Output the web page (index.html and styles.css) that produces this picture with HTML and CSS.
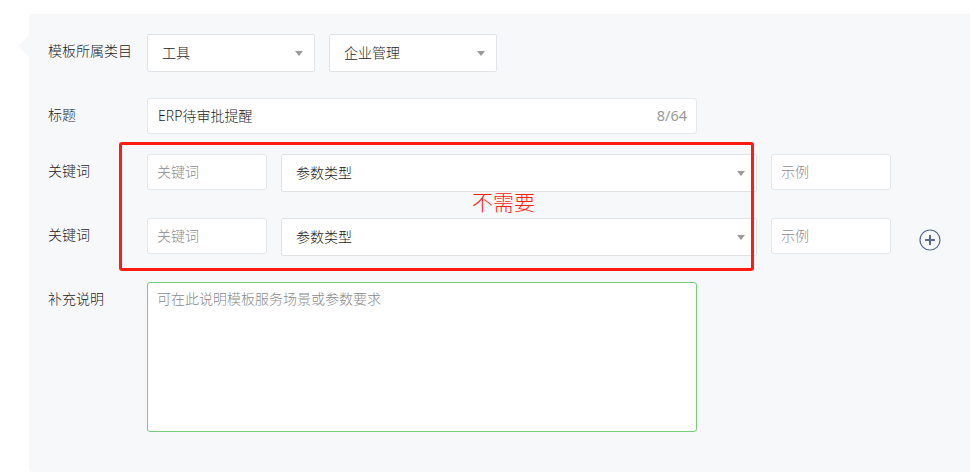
FILE: index.html
```html
<!DOCTYPE html>
<html lang="zh-CN">
<head>
    <meta charset="UTF-8">
    <meta name="viewport" content="width=device-width, initial-scale=1.0">
    <title>模板申请</title>
    <link rel="stylesheet" href="styles.css">
</head>
<body>
    <form class="panel">
        <div class="form-row">
            <label class="form-label">模板所属类目</label>
            <div class="dropdown dropdown-small">工具</div>
            <div class="dropdown dropdown-small">企业管理</div>
        </div>

        <div class="form-row form-row-title">
            <label class="form-label" for="title">标题</label>
            <div class="input-box">
                <input type="text" id="title" value="ERP待审批提醒">
                <span class="counter">8/64</span>
            </div>
        </div>

        <!-- Keywords -->
        <div class="form-row">
            <label class="form-label">关键词</label>
            <div class="input-box input-small"><input type="text" placeholder="关键词"></div>
            <div class="dropdown dropdown-wide">参数类型</div>
            <div class="input-box input-small"><input type="text" placeholder="示例"></div>
        </div>
        <div class="form-row">
            <label class="form-label">关键词</label>
            <div class="input-box input-small"><input type="text" placeholder="关键词"></div>
            <div class="dropdown dropdown-wide">参数类型</div>
            <div class="input-box input-small"><input type="text" placeholder="示例"></div>
            <svg class="add-icon" width="22" height="22" viewBox="0 0 22 22">
                <circle cx="11" cy="11" r="10" fill="none" stroke="#576b95" stroke-width="1.2"/>
                <path d="M11 6v10M6 11h10" stroke="#576b95" stroke-width="2"/>
            </svg>
        </div>

        <div class="form-row">
            <label class="form-label" for="remark">补充说明</label>
            <textarea class="remark" id="remark" placeholder="可在此说明模板服务场景或参数要求"></textarea>
        </div>

        <!-- Marked area -->
        <div class="mark">
            <span class="mark-text">不需要</span>
        </div>
    </form>
</body>
</html>
```
FILE: styles.css
```css
* {
    margin: 0;
    padding: 0;
    box-sizing: border-box;
}
body {
    background-color: #fff;
    color: #1c1c1c;
    font-family: "Noto Sans", "Noto Sans CJK SC", sans-serif;
    font-size: 14px;
    font-weight: 300;
    overflow: hidden;
}
.panel {
    position: relative;
    margin: 14px 0 0 29px;
    padding: 20px 0 40px 19px;
    background-color: #f7f8fa;
    border-radius: 4px 0 0 4px;
}
.panel::before {
    content: "";
    position: absolute;
    left: -11px;
    top: 21px;
    border: 11px solid transparent;
    border-left: 0;
    border-right-color: #f7f8fa;
}
.form-row {
    display: flex;
    align-items: flex-start;
    gap: 14px;
    margin-bottom: 26px;
}
.form-row-title {
    margin-bottom: 20px;
}
.form-row:nth-of-type(5) {
    margin-bottom: 0;
}
.form-label {
    width: 85px;
    line-height: 34px;
    white-space: nowrap;
}
.dropdown {
    display: flex;
    justify-content: space-between;
    height: 38px;
    padding: 0 11px 0 14px;
    background-color: #fff;
    border: 1px solid #e0e3e7;
    border-radius: 2px;
    line-height: 36px;
}
.dropdown::after {
    content: "";
    align-self: center;
    border: 4px solid transparent;
    border-top: 5px solid #9a9a9a;
    border-bottom: 0;
}
.dropdown-small {
    width: 168px;
}
.dropdown-wide {
    width: 476px;
}
.input-box {
    display: flex;
    align-items: center;
    width: 550px;
    height: 36px;
    padding: 0 9px 2px;
    background-color: #fff;
    border: 1px solid #e4e8eb;
    border-radius: 3px;
}
.input-small {
    width: 120px;
}
input {
    flex: 1;
    min-width: 0;
    border: none;
    outline: none;
    background: none;
    color: #1c1c1c;
    font: inherit;
}
#title {
    padding-left: 1px;
}
.counter {
    color: #9a9a9a;
    font-size: 14.5px;
    font-weight: 400;
}
input::placeholder, textarea::placeholder {
    color: #8a8a8a;
}
.add-icon {
    margin: 11px 0 0 14px;
}
.remark {
    width: 550px;
    height: 150px;
    padding: 5px 9px;
    border: 1px solid #78cc78;
    border-radius: 3px;
    outline: none;
    resize: none;
    background-color: #fff;
    font: inherit;
    line-height: 21px;
}
.mark {
    position: absolute;
    left: 90px;
    top: 128px;
    width: 635px;
    height: 129px;
    border: 3px solid #ff1d12;
    border-radius: 3px;
}
.mark-text {
    position: absolute;
    left: 350px;
    top: 42px;
    color: #ff1d12;
    font-size: 21px;
    line-height: 30px;
    white-space: nowrap;
}
```
